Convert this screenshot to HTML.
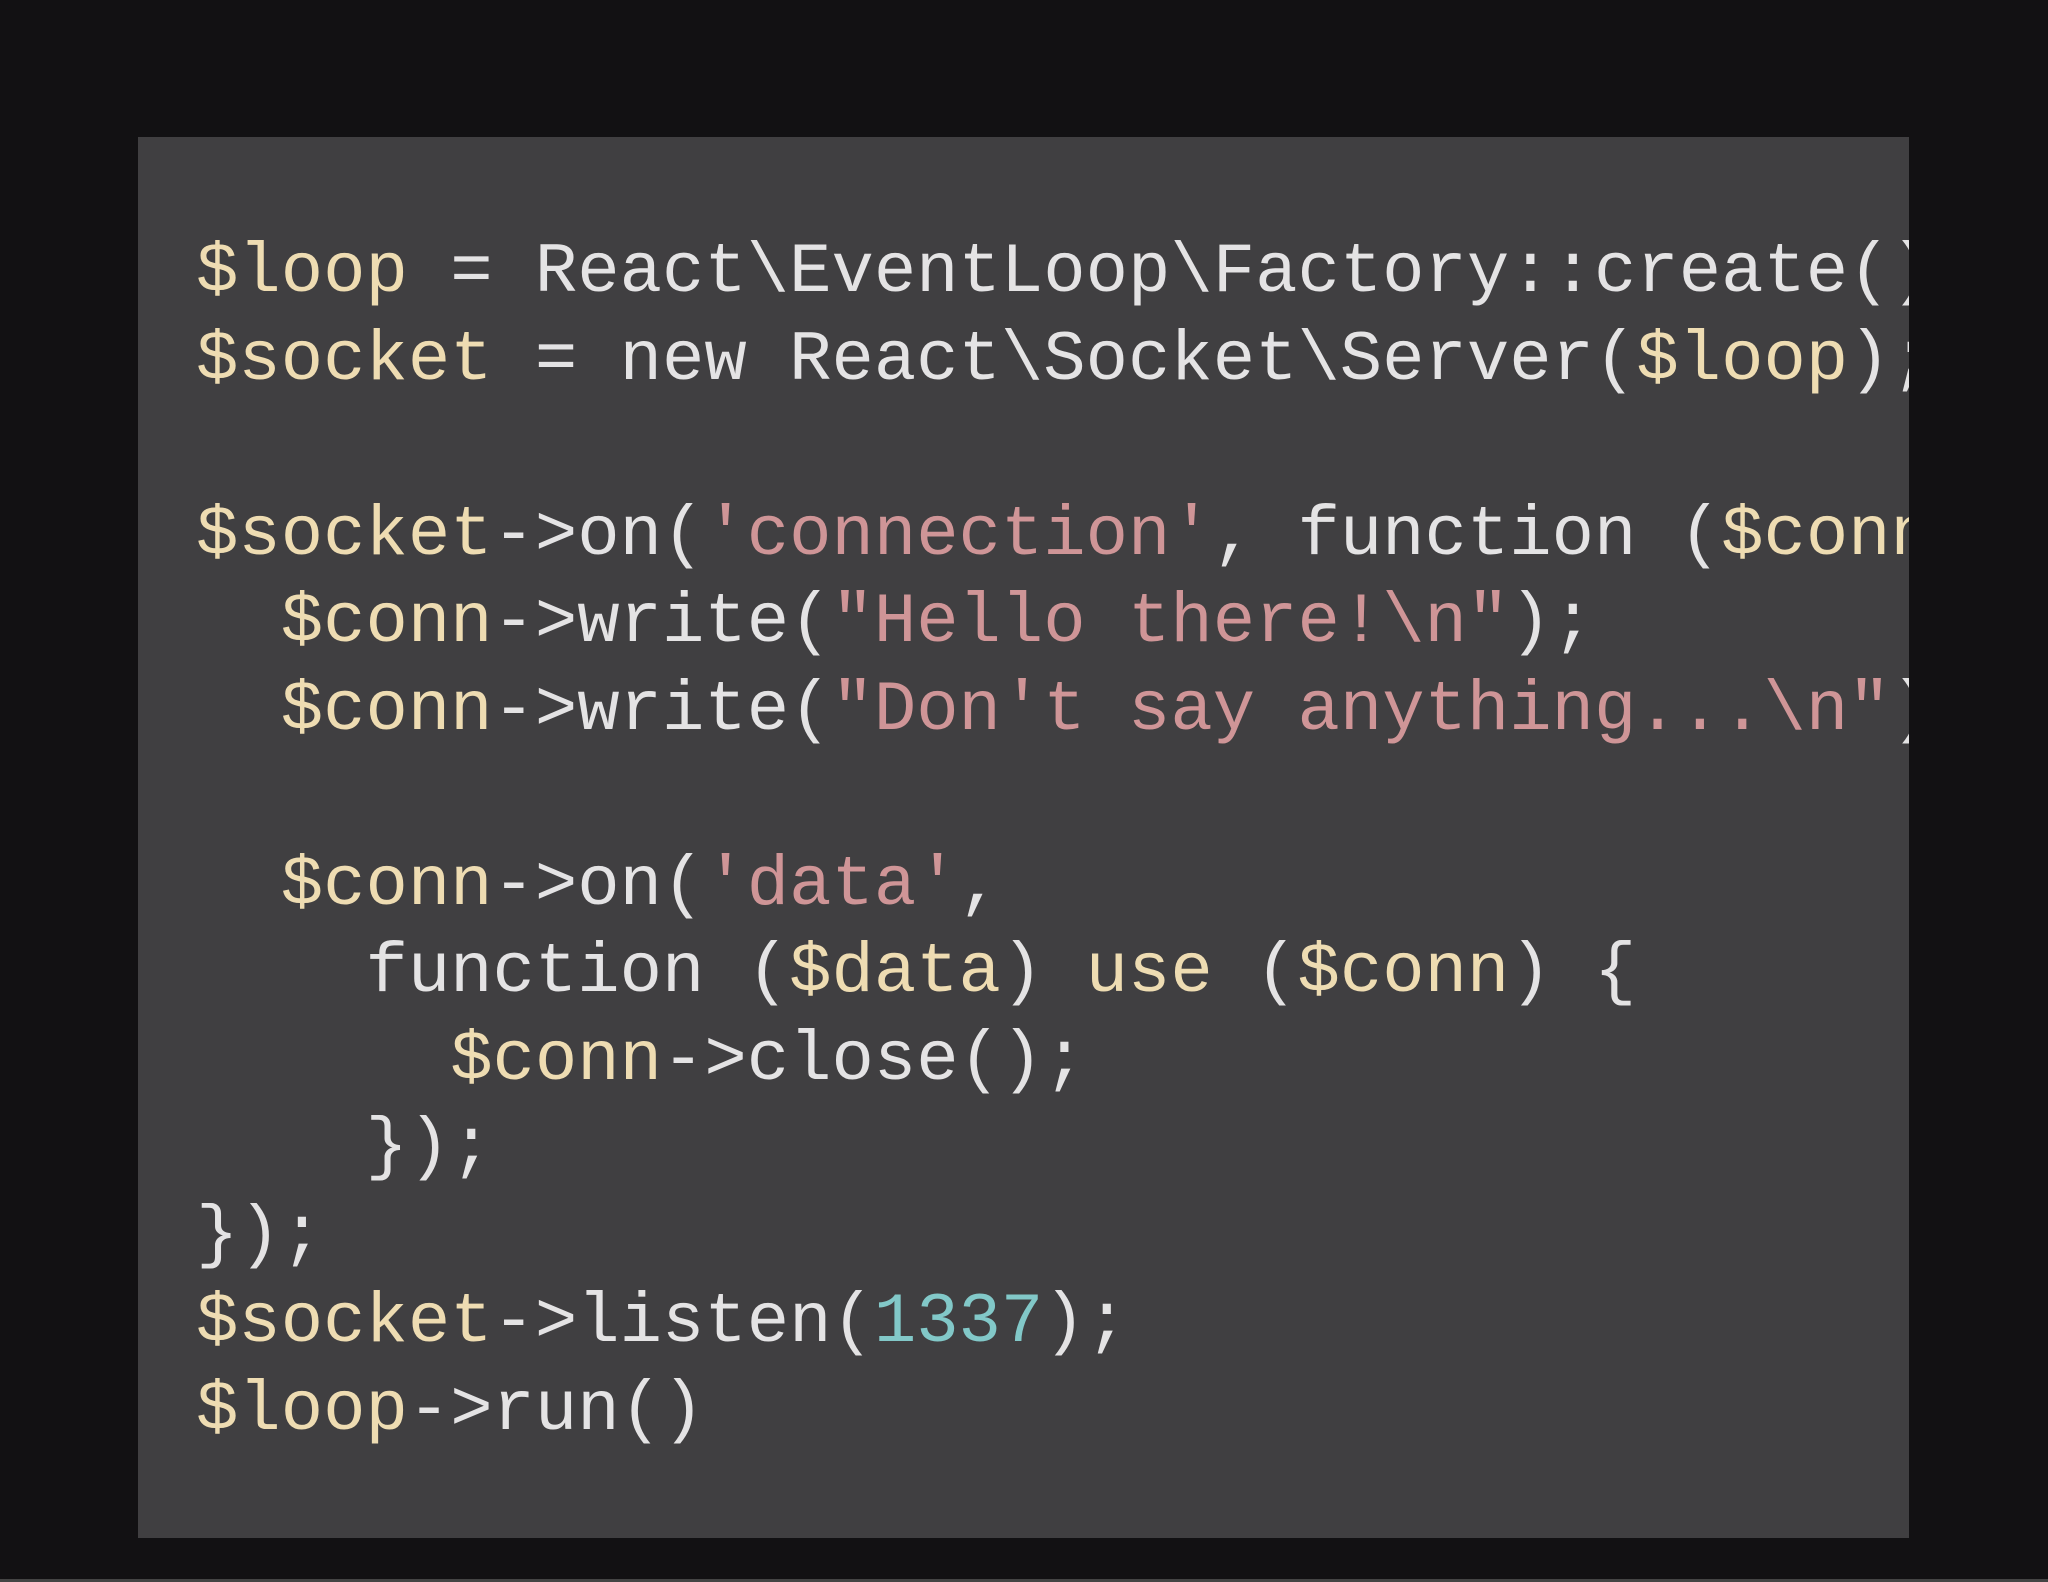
<!DOCTYPE html>
<html><head><meta charset="utf-8"><style>
html,body{margin:0;padding:0}
body{width:2048px;height:1582px;background:#121113;position:relative;overflow:hidden}
.strip{position:absolute;left:0;top:1579px;width:2048px;height:3px;background:#444}
.panel{position:absolute;left:138px;top:137px;width:1771px;height:1401px;background:#403f41;overflow:hidden}
pre{margin:0;position:absolute;left:58px;top:93px;font-family:"Liberation Mono","DejaVu Sans Mono",monospace;font-size:70.6px;line-height:87.5px;color:#e4e3e4;white-space:pre}
.v{color:#eedcb2}.s{color:#cf9597}.n{color:#82c8c8}
</style></head><body>
<div class="panel"><pre><span class="v">$loop</span> = React\EventLoop\Factory::create();
<span class="v">$socket</span> = new React\Socket\Server(<span class="v">$loop</span>);

<span class="v">$socket</span>-&gt;on(<span class="s">'connection'</span>, function (<span class="v">$conn</span>) {
  <span class="v">$conn</span>-&gt;write(<span class="s">"Hello there!\n"</span>);
  <span class="v">$conn</span>-&gt;write(<span class="s">"Don't say anything...\n"</span>);

  <span class="v">$conn</span>-&gt;on(<span class="s">'data'</span>,
    function (<span class="v">$data</span>) <span class="v">use</span> (<span class="v">$conn</span>) {
      <span class="v">$conn</span>-&gt;close();
    });
});
<span class="v">$socket</span>-&gt;listen(<span class="n">1337</span>);
<span class="v">$loop</span>-&gt;run()</pre></div>
<div class="strip"></div>
</body></html>
